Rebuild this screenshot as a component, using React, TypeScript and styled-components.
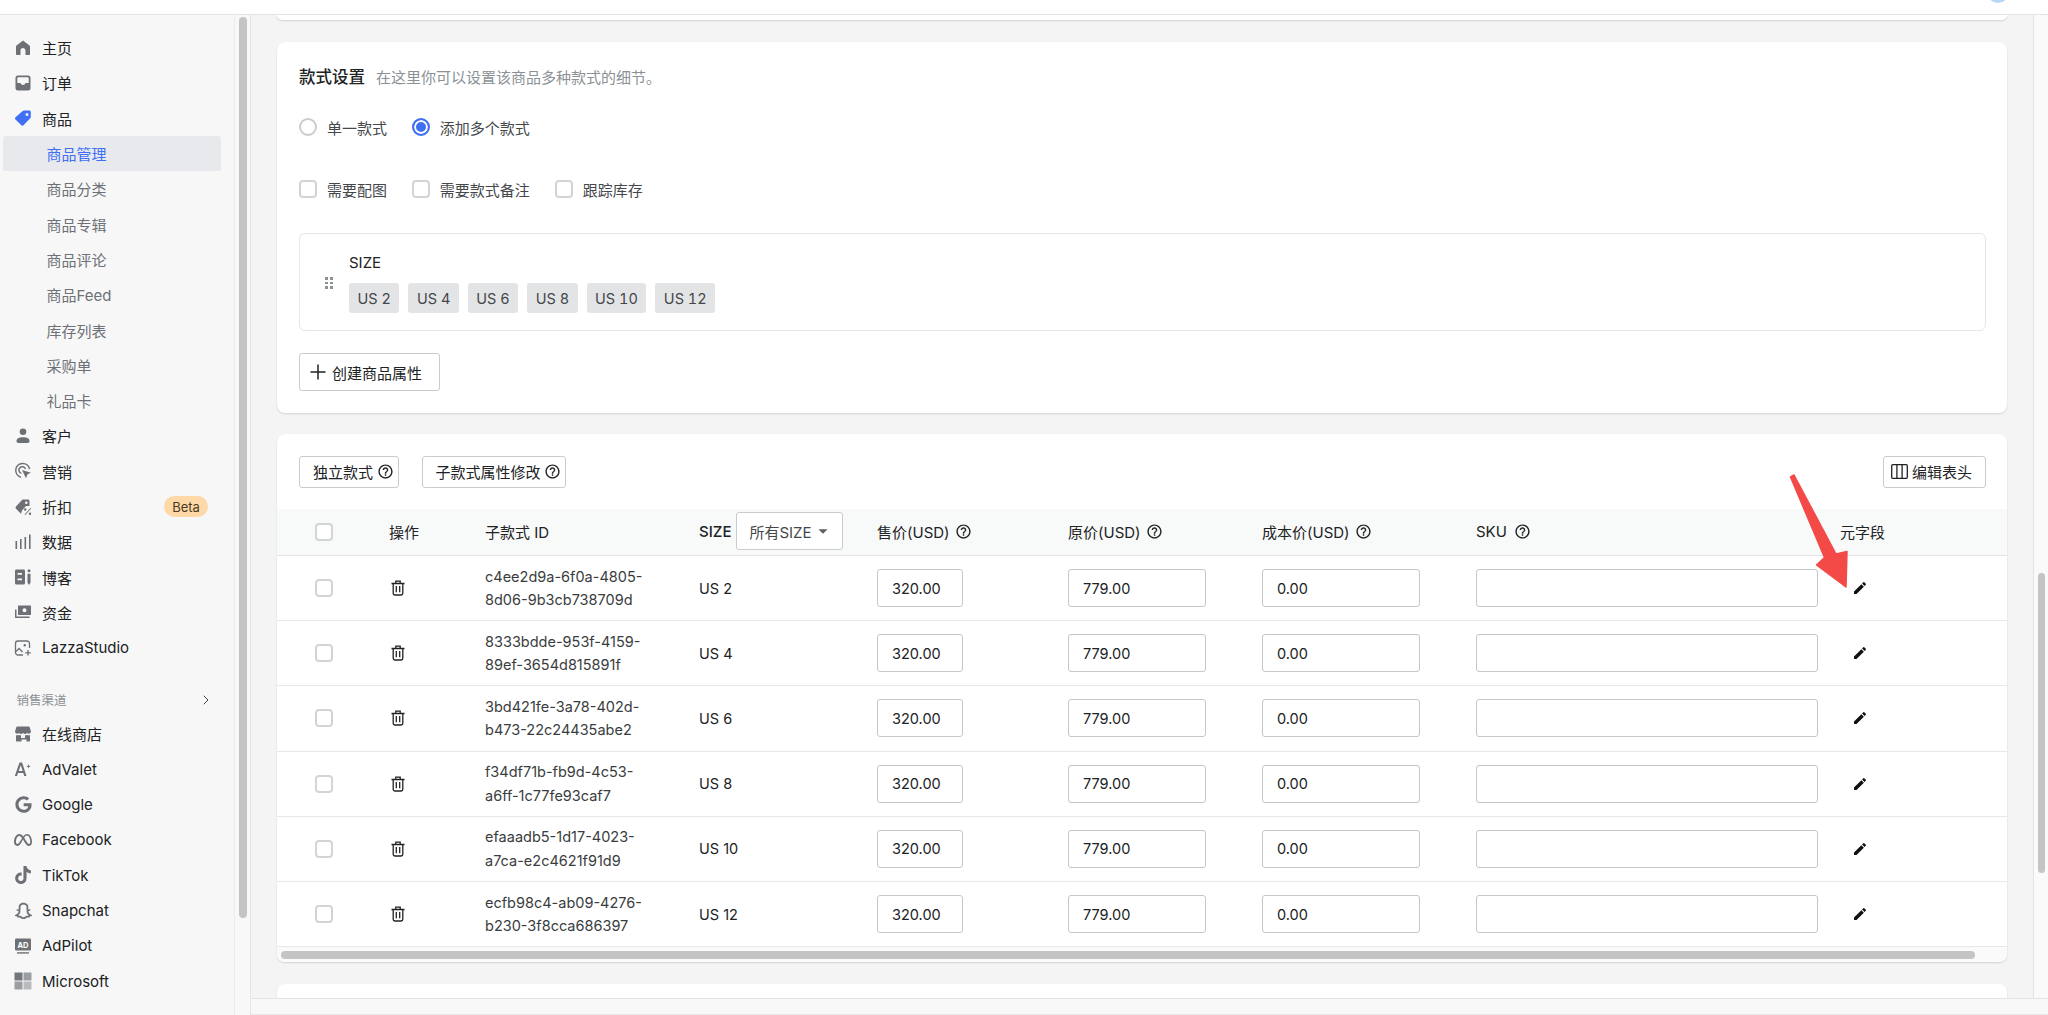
import React from "react"
import styled, { createGlobalStyle } from "styled-components"
import { FaGoogle, FaTiktok } from "react-icons/fa"
import { FaMeta } from "react-icons/fa6"
import { RiSnapchatLine } from "react-icons/ri"
import { MdEdit, MdOutlineHelpOutline, MdArrowDropDown } from "react-icons/md"
import { Plus, ChevronRight } from "lucide-react"

const GlobalStyle = createGlobalStyle`
    html, body {
        margin: 0;
        padding: 0;
        height: 100%;
        overflow: hidden;
        background: #f7f7f8;
    }

    body, input {
        font-family: Inter, "Noto Sans CJK SC", sans-serif;
        font-size: 14.5px;
        color: #202223;
    }

    * {
        box-sizing: border-box;
    }
`

const Page = styled.div`
    position: relative;
    width: 2048px;
    height: 1015px;
    display: flex;
    flex-direction: column;
    overflow: hidden;
`

const TopBar = styled.header`
    position: relative;
    height: 15px;
    flex: none;
    background: #fff;
    border-bottom: 1px solid #e3e3e3;
    overflow: hidden;
`

const Avatar = styled.span`
    position: absolute;
    left: 1987px;
    top: -19px;
    width: 22px;
    height: 22px;
    border-radius: 50%;
    background: #b9d6f6;
`

const Body = styled.div`
    flex: 1;
    min-height: 0;
    display: flex;
`

const Sidebar = styled.nav`
    width: 235px;
    flex: none;
    padding-top: 15px;
    background: #f7f7f8;
    border-right: 1px solid #ececec;
`

const NavRow = styled.div<{ $active?: boolean; $sub?: boolean }>`
    height: 35.3px;
    display: flex;
    align-items: center;
    gap: 10px;
    margin: 0 13px 0 ${props => (props.$sub ? "3px" : "14px")};
    padding-left: ${props => (props.$sub ? "43.5px" : "0")};
    border-radius: 3px;
    font-size: 15px;
    color: ${props => (props.$active ? "#3e6ff5" : props.$sub ? "#6d7175" : "#202223")};
    background: ${props => (props.$active ? "#e8e9ed" : "transparent")};
`

const NavIcon = styled.span<{ $color?: string }>`
    width: 18px;
    height: 18px;
    flex: none;
    display: flex;
    align-items: center;
    justify-content: center;
    color: ${props => props.$color || "#6d7175"};

    svg {
        display: block;
        flex: none;
    }
`

const Badge = styled.span`
    margin-left: auto;
    margin-right: 13px;
    width: 44px;
    height: 21.5px;
    border-radius: 11px;
    display: flex;
    align-items: center;
    justify-content: center;
    background: #ffd8a8;
    font-size: 13px;
    color: #4a3a20;
`

const ChannelHead = styled.div`
    margin: 26px 20px 0 16.5px;
    height: 17px;
    display: flex;
    align-items: center;
    justify-content: space-between;
    font-size: 12.5px;
    color: #8c9196;
`

const ChannelList = styled.div`
    margin-top: 8px;
`

const SideTrack = styled.div`
    width: 16px;
    flex: none;
    padding: 2px 3px 0 4px;
    background: #f8f8f8;
    border-right: 1px solid #e6e6e6;
`

const SideThumb = styled.div`
    height: 901px;
    border-radius: 4px;
    background: #c4c4c4;
`

const RightColumn = styled.div`
    flex: 1;
    min-width: 0;
    display: flex;
    flex-direction: column;
`

const ContentRow = styled.div`
    height: 984px;
    flex: none;
    display: flex;
    border-bottom: 1px solid #e3e3e3;
`

const Main = styled.main`
    flex: 1;
    min-width: 0;
    padding: 0 26px;
    background: #f4f4f4;
    overflow: hidden;
`

const Card = styled.section`
    background: #fff;
    border-radius: 8px;
    box-shadow: 0 1px 2px rgba(0, 0, 0, 0.14);
`

const StubCard = styled(Card)`
    height: 5px;
    border-radius: 0 0 8px 8px;
    margin-bottom: 22px;
`

const StyleCard = styled(Card)`
    height: 371px;
    padding: 22px 21px 0 22px;
    margin-bottom: 21px;
`

const ClippedCard = styled(Card)`
    height: 40px;
`

const CardTitle = styled.div`
    height: 24px;
    display: flex;
    align-items: center;
    gap: 11px;
`

const TitleText = styled.strong`
    font-size: 16.5px;
    font-weight: 500;
`

const TitleHint = styled.span`
    font-size: 15px;
    color: #8c9196;
`

const OptionRow = styled.div<{ $top: number }>`
    display: flex;
    height: 20px;
    align-items: center;
    margin-top: ${props => props.$top}px;
    gap: 24.8px;
`

const Option = styled.label`
    display: flex;
    align-items: center;
    gap: 10px;
    font-size: 15px;
    color: #45484b;
`

const Radio = styled.span<{ $checked?: boolean }>`
    width: 18px;
    height: 18px;
    border-radius: 50%;
    flex: none;
    border: 2px solid ${props => (props.$checked ? "#3e6ff5" : "#c9cccf")};
    background: ${props => (props.$checked ? "#3e6ff5" : "#fff")};
    box-shadow: ${props => (props.$checked ? "inset 0 0 0 2px #fff" : "none")};
`

const Check = styled.span`
    width: 18px;
    height: 18px;
    flex: none;
    border: 2px solid #d2d5d8;
    border-radius: 4px;
    background: #fff;
`

const AttrBox = styled.div`
    margin-top: 34px;
    height: 98px;
    border: 1px solid #e6e6e6;
    border-radius: 6px;
    display: flex;
    align-items: center;
    padding: 2px 0 0 25px;
    gap: 16px;
`

const Grip = styled.span`
    width: 8px;
    flex: none;
    display: grid;
    grid-template-columns: 3px 3px;
    gap: 2px;

    i {
        width: 2.5px;
        height: 2.5px;
        background: #8c9196;
    }
`

const AttrName = styled.div`
    font-size: 15px;
    line-height: 20px;
    margin-bottom: 10px;
`

const ChipRow = styled.div`
    display: flex;
    gap: 9px;
`

const Chip = styled.span`
    height: 30px;
    padding: 0 8.5px;
    display: flex;
    align-items: center;
    border-radius: 3px;
    background: #e3e4e6;
    font-size: 14.5px;
    font-variant-numeric: tabular-nums;
    color: #44474a;
`

const Button = styled.button`
    height: 31.5px;
    padding: 0 4px 0 13px;
    display: inline-flex;
    align-items: center;
    gap: 3.5px;
    background: #fff;
    border: 1px solid #c9cccf;
    border-radius: 3px;
    font-family: inherit;
    font-size: 15px;
    color: #202223;
`

const EditColumnsButton = styled(Button)`
    margin-left: auto;
    padding: 0 13px 0 7px;
    gap: 4px;
`

const CreateButton = styled(Button)`
    height: 38px;
    width: 141px;
    margin-top: 22px;
    padding: 0 0 0 6px;
    gap: 2px;
`

const TableCard = styled(Card)`
    height: 528px;
    margin-bottom: 22px;
    overflow: hidden;
`

const Toolbar = styled.div`
    height: 75px;
    padding: 22px 21px 0 22px;
    display: flex;
    align-items: flex-start;
    gap: 23px;
`

const TableGrid = styled.div`
    display: grid;
    grid-template-columns: 112px 96px 214px 178px 191px 194px 214px 364px 167px;
`

const HeadRow = styled(TableGrid)`
    height: 47px;
    background: #f8f9f9;
    border-bottom: 1px solid #e3e3e3;
`

const BodyRow = styled(TableGrid)`
    height: 65.2px;
    border-bottom: 1px solid #e8e8e8;
`

const Cell = styled.div`
    display: flex;
    align-items: center;
    min-width: 0;
    font-size: 14.5px;
`

const CheckCell = styled(Cell)`
    padding-left: 38px;
`

const HeadCell = styled(Cell)`
    font-size: 15px;
    gap: 5px;
    padding-bottom: 2px;
`

const SkuHead = styled(HeadCell)`
    gap: 7px;
`

const SizeCell = styled(HeadCell)`
    font-weight: 500;
`

const IdText = styled.div`
    font-size: 14.5px;
    line-height: 23.5px;
    color: #3a3d40;

    span {
        display: block;
        white-space: nowrap;
    }
`

const SizeSelect = styled.div`
    width: 107px;
    height: 38px;
    padding-left: 12px;
    display: flex;
    align-items: center;
    background: #fff;
    border: 1px solid #c9cccf;
    border-radius: 3px;
    font-weight: 400;
    color: #45484b;
`

const PriceInput = styled.input<{ $width: number }>`
    width: ${props => props.$width}px;
    height: 38px;
    padding: 0 14px;
    background: #fff;
    border: 1px solid #c4c7ca;
    border-radius: 3px;
    font-size: 14.5px;
    color: #202223;
    outline: none;
`

const TrashBtn = styled.span`
    display: flex;
    margin-left: 1px;
    color: #202223;
`

const PencilBtn = styled.span`
    display: flex;
    margin-left: 12px;
    color: #111;
`

const ScrollTrack = styled.div`
    height: 15px;
    padding: 4px 32px 0 4px;
    background: #fafafa;
`

const ScrollThumb = styled.div`
    height: 8px;
    border-radius: 4px;
    background: #c4c4c4;
`

const MainTrack = styled.div`
    width: 15px;
    flex: none;
    padding: 558px 3px 0 4px;
    background: #fafafa;
    border-left: 1px solid #e3e3e3;
`

const MainThumb = styled.div`
    height: 300px;
    border-radius: 4px;
    background: #c4c4c4;
`

const BottomBar = styled.div`
    flex: 1;
    background: #f8f8f8;
    border-bottom: 1px solid #e8e8e8;
`

const Arrow = styled.svg`
    position: absolute;
    left: 1785px;
    top: 470px;
    width: 70px;
    height: 125px;
`

const HelpIcon = () => <MdOutlineHelpOutline size={17} />

// sidebar drawings, all on an 18 box
const HomeIcon = () => (
    <svg width="18" height="18" viewBox="0 0 18 18" fill="currentColor">
        <path d="M9 1.5 15.5 6.5c.4.3.5.6.5 1V15c0 .6-.4 1-1 1h-3.500V11.500a2.500 2.500 0 0 0-5 0V16H3c-.6 0-1-.4-1-1V7.500c0-.4.1-.7.5-1z" />
    </svg>
)

const InboxIcon = () => (
    <svg width="18" height="18" viewBox="0 0 18 18" fill="currentColor">
        <path fillRule="evenodd" d="M4 1.500h10A2.500 2.500 0 0 1 16.500 4v10a2.500 2.500 0 0 1-2.500 2.500H4A2.500 2.500 0 0 1 1.500 14V4A2.500 2.500 0 0 1 4 1.500zM4.200 3.300c-.5 0-.9.4-.9.9V9h3.200c.4 1.300 1.200 2 2.500 2s2.100-.7 2.500-2h3.200V4.200c0-.5-.4-.9-.9-.9z" />
    </svg>
)

const TagIcon = () => (
    <svg width="18" height="18" viewBox="0 0 18 18" fill="currentColor">
        <path fillRule="evenodd" d="M10 1.500h5.200c.9 0 1.600.7 1.600 1.600V8c0 .5-.2 1-.6 1.300l-6.700 7c-.6.600-1.600.6-2.200 0L1.500 10.500c-.6-.6-.6-1.600 0-2.200l7.200-6.300c.4-.3.800-.5 1.300-.5zM13 4a1.500 1.500 0 1 0 0 3 1.500 1.500 0 0 0 0-3z" />
    </svg>
)

const PersonIcon = () => (
    <svg width="18" height="18" viewBox="0 0 18 18" fill="currentColor">
        <circle cx="9" cy="4.800" r="3.300" />
        <path d="M2.500 14c0-2.400 2.200-3.800 6.500-3.800s6.500 1.400 6.500 3.800c0 1.300-.7 2-2 2h-9c-1.300 0-2-.7-2-2z" />
    </svg>
)

const MarketingIcon = () => (
    <svg width="18" height="18" viewBox="0 0 18 18" fill="none" stroke="currentColor" strokeWidth="1.500">
        <path d="M7 15.200A7 7 0 1 1 15.600 7" />
        <path d="M7.400 11.400A3.400 3.400 0 1 1 11.500 7" />
        <path d="M8 8l9 2.800-3.500 1.500-1.500 4z" fill="currentColor" stroke="none" />
    </svg>
)

const DiscountIcon = () => (
    <svg width="18" height="18" viewBox="0 0 18 18" fill="currentColor">
        <path fillRule="evenodd" d="M9 1.500h5c.9 0 1.500.6 1.500 1.500v5h-3.500l-4 4.500-1 3.300-5-5c-.6-.6-.6-1.600 0-2.200L8 1.900c.3-.3.600-.4 1-.4zM12.300 3.500a1.300 1.300 0 1 0 0 2.600 1.300 1.300 0 0 0 0-2.600z" />
        <path d="M10.500 16.500l6-6.500.7.600-6 6.500z" />
        <circle cx="11.200" cy="11.500" r="1.200" />
        <circle cx="16" cy="15.800" r="1.200" />
    </svg>
)

const BarsIcon = () => (
    <svg width="18" height="18" viewBox="0 0 18 18" fill="currentColor">
        <rect x="1.500" y="8" width="1.600" height="8" />
        <rect x="6" y="6" width="1.600" height="10" />
        <rect x="10.500" y="4" width="1.600" height="12" />
        <rect x="15" y="1.500" width="1.600" height="14.500" />
    </svg>
)

const BlogIcon = () => (
    <svg width="18" height="18" viewBox="0 0 18 18" fill="currentColor">
        <path fillRule="evenodd" d="M2.500 1.500h7c1 0 1.500.6 1.500 1.500v12c0 .9-.6 1.500-1.500 1.500h-7C1.600 16.500 1 15.900 1 15V3c0-.9.6-1.500 1.500-1.500zM3.500 5v1.800H8V5zm0 5.500v1.800H8v-1.800z" />
        <circle cx="15" cy="2.800" r="1.500" />
        <path d="M13.500 5.800h3v8.700L15 17l-1.500-2.500z" />
    </svg>
)

const CashIcon = () => (
    <svg width="18" height="18" viewBox="0 0 18 18" fill="currentColor">
        <path fillRule="evenodd" d="M4.500 2.500h12c.3 0 .5.200.5.500v8.500c0 .3-.2.500-.5.500h-12c-.3 0-.5-.2-.5-.5V3c0-.3.200-.5.500-.5zm6 2.700a2 2 0 1 0 0 4 2 2 0 0 0 0-4z" />
        <path d="M1 6.500h1.500v7h13V15H1.500c-.3 0-.5-.2-.5-.5z" />
    </svg>
)

const StudioIcon = () => (
    <svg width="18" height="18" viewBox="0 0 18 18" fill="none" stroke="currentColor" strokeWidth="1.300">
        <path d="M9 16H4a2.500 2.500 0 0 1-2.500-2.500v-9A2.500 2.500 0 0 1 4 2h9a2.500 2.500 0 0 1 2.500 2.500V9" />
        <path d="M2 12.500 5 9.500l3.500 3.500" />
        <circle cx="10.800" cy="6.200" r="1.200" fill="currentColor" stroke="none" />
        <path d="M14 11v5.500M11.200 13.800h5.500" />
    </svg>
)

const StoreIcon = () => (
    <svg width="18" height="18" viewBox="0 0 18 18" fill="currentColor">
        <path d="M3.500 1.500h11c.6 0 1 .3 1.200.8L17 6.500a2.300 2.300 0 0 1-4 1.500 2.700 2.700 0 0 1-4 0 2.700 2.700 0 0 1-4 0 2.300 2.300 0 0 1-4-1.500l1.300-4.200c.2-.5.600-.8 1.200-.8z" />
        <path d="M2 10.200c1 .3 2.200.2 3-.3.600.3 1.300.4 2 .3V13h4v-2.800c.7.100 1.400 0 2-.3.800.5 2 .6 3 .3V15.500c0 .6-.4 1-1 1h-2.500V14.500h-5v2H3c-.6 0-1-.4-1-1z" />
    </svg>
)

const AdValetIcon = () => (
    <svg width="18" height="18" viewBox="0 0 18 18" fill="currentColor">
        <path d="M5.500 2.500h2.600l4.400 13.500h-2.300l-.9-3H4l-1 3H.8zm3.200 8.600L6.800 5.300 4.700 11.100z" />
        <path d="M14.500 4l.6 1.700 1.700.6-1.700.6-.6 1.700-.6-1.700-1.700-.6 1.700-.6z" />
    </svg>
)

const AdIcon = () => (
    <svg width="18" height="18" viewBox="0 0 18 18" fill="currentColor">
        <rect x="1" y="1.500" width="16" height="12" rx="1.200" />
        <rect x="3" y="15.200" width="12" height="1.400" />
        <text x="9" y="10.500" textAnchor="middle" fontSize="7.500" fontWeight="700" fill="#fff" fontFamily="Inter, sans-serif">AD</text>
    </svg>
)

const WindowsIcon = () => (
    <svg width="18" height="18" viewBox="0 0 18 18">
        <rect x="0.500" y="0.500" width="8" height="8" fill="#72767a" />
        <rect x="9.500" y="0.500" width="8" height="8" fill="#9b9ea1" />
        <rect x="0.500" y="9.500" width="8" height="8" fill="#9b9ea1" />
        <rect x="9.500" y="9.500" width="8" height="8" fill="#b9bbbd" />
    </svg>
)

const TrashIcon = () => (
    <svg width="16" height="16" viewBox="0 0 16 16" fill="none" stroke="currentColor" strokeWidth="1.300">
        <path d="M1.500 3.500h13M5.800 3.300V1.200h4.400v2.100" />
        <path d="M3.200 3.500v9.800c0 1 .6 1.700 1.700 1.700h6.200c1 0 1.700-.7 1.700-1.700V3.500" />
        <path d="M6.300 6v6.300M9.700 6v6.300" />
    </svg>
)

const ColumnsIcon = () => (
    <svg width="17" height="15" viewBox="0 0 17 15" fill="none" stroke="currentColor" strokeWidth="1.300">
        <rect x="0.700" y="0.700" width="15.600" height="13.600" rx="1" />
        <path d="M5.900 0.700v13.600M11.100 0.700v13.600" />
    </svg>
)

const mainNav = [
    { label: "主页", icon: <HomeIcon /> },
    { label: "订单", icon: <InboxIcon /> },
    { label: "商品", icon: <TagIcon />, color: "#3e6ff5" },
    { label: "商品管理", sub: true, active: true },
    { label: "商品分类", sub: true },
    { label: "商品专辑", sub: true },
    { label: "商品评论", sub: true },
    { label: "商品Feed", sub: true },
    { label: "库存列表", sub: true },
    { label: "采购单", sub: true },
    { label: "礼品卡", sub: true },
    { label: "客户", icon: <PersonIcon /> },
    { label: "营销", icon: <MarketingIcon /> },
    { label: "折扣", icon: <DiscountIcon />, badge: "Beta" },
    { label: "数据", icon: <BarsIcon /> },
    { label: "博客", icon: <BlogIcon /> },
    { label: "资金", icon: <CashIcon /> },
    { label: "LazzaStudio", icon: <StudioIcon /> },
]

const channels = [
    { label: "在线商店", icon: <StoreIcon /> },
    { label: "AdValet", icon: <AdValetIcon /> },
    { label: "Google", icon: <FaGoogle size={17} /> },
    { label: "Facebook", icon: <FaMeta size={18} /> },
    { label: "TikTok", icon: <FaTiktok size={18} /> },
    { label: "Snapchat", icon: <RiSnapchatLine size={21} /> },
    { label: "AdPilot", icon: <AdIcon /> },
    { label: "Microsoft", icon: <WindowsIcon /> },
]

const sizes = ["US 2", "US 4", "US 6", "US 8", "US 10", "US 12"]

const variants = [
    { id: ["c4ee2d9a-6f0a-4805-", "8d06-9b3cb738709d"], size: "US 2" },
    { id: ["8333bdde-953f-4159-", "89ef-3654d815891f"], size: "US 4" },
    { id: ["3bd421fe-3a78-402d-", "b473-22c24435abe2"], size: "US 6" },
    { id: ["f34df71b-fb9d-4c53-", "a6ff-1c77fe93caf7"], size: "US 8" },
    { id: ["efaaadb5-1d17-4023-", "a7ca-e2c4621f91d9"], size: "US 10" },
    { id: ["ecfb98c4-ab09-4276-", "b230-3f8cca686397"], size: "US 12" },
]

function NavItem({ item }: { item: any }) {
    return (
        <NavRow $active={item.active} $sub={item.sub}>
            {item.icon && <NavIcon $color={item.color}>{item.icon}</NavIcon>}
            {item.label}
            {item.badge && <Badge>{item.badge}</Badge>}
        </NavRow>
    )
}

export default function App() {
    return (
        <Page>
            <GlobalStyle />
            <TopBar>
                <Avatar />
            </TopBar>
            <Body>
                <Sidebar>
                    {mainNav.map(item => <NavItem key={item.label} item={item} />)}
                    <ChannelHead>
                        销售渠道
                        <ChevronRight size={16} strokeWidth={1.5} color="#45484b" />
                    </ChannelHead>
                    <ChannelList>
                        {channels.map(item => <NavItem key={item.label} item={item} />)}
                    </ChannelList>
                </Sidebar>
                <SideTrack>
                    <SideThumb />
                </SideTrack>
                <RightColumn>
                    <ContentRow>
                        <Main>
                            <StubCard />
                            <StyleCard>
                                <CardTitle>
                                    <TitleText>款式设置</TitleText>
                                    <TitleHint>在这里你可以设置该商品多种款式的细节。</TitleHint>
                                </CardTitle>
                                <OptionRow $top={29}>
                                    <Option><Radio />单一款式</Option>
                                    <Option><Radio $checked />添加多个款式</Option>
                                </OptionRow>
                                <OptionRow $top={42}>
                                    <Option><Check />需要配图</Option>
                                    <Option><Check />需要款式备注</Option>
                                    <Option><Check />跟踪库存</Option>
                                </OptionRow>
                                <AttrBox>
                                    <Grip>
                                        {[0, 1, 2, 3, 4, 5].map(n => <i key={n} />)}
                                    </Grip>
                                    <div>
                                        <AttrName>SIZE</AttrName>
                                        <ChipRow>
                                            {sizes.map(size => <Chip key={size}>{size}</Chip>)}
                                        </ChipRow>
                                    </div>
                                </AttrBox>
                                <CreateButton>
                                    <Plus size={24} strokeWidth={1.5} />
                                    创建商品属性
                                </CreateButton>
                            </StyleCard>
                            <TableCard>
                                <Toolbar>
                                    <Button>独立款式<HelpIcon /></Button>
                                    <Button>子款式属性修改<HelpIcon /></Button>
                                    <EditColumnsButton>
                                        <ColumnsIcon />
                                        编辑表头
                                    </EditColumnsButton>
                                </Toolbar>
                                <HeadRow>
                                    <CheckCell><Check /></CheckCell>
                                    <HeadCell>操作</HeadCell>
                                    <HeadCell>子款式 ID</HeadCell>
                                    <SizeCell>
                                        SIZE
                                        <SizeSelect>
                                            所有SIZE
                                            <MdArrowDropDown size={22} color="#5c5f62" />
                                        </SizeSelect>
                                    </SizeCell>
                                    <HeadCell>售价(USD)<HelpIcon /></HeadCell>
                                    <HeadCell>原价(USD)<HelpIcon /></HeadCell>
                                    <HeadCell>成本价(USD)<HelpIcon /></HeadCell>
                                    <SkuHead>SKU<HelpIcon /></SkuHead>
                                    <HeadCell>元字段</HeadCell>
                                </HeadRow>
                                {variants.map(variant => (
                                    <BodyRow key={variant.size}>
                                        <CheckCell><Check /></CheckCell>
                                        <Cell><TrashBtn><TrashIcon /></TrashBtn></Cell>
                                        <Cell>
                                            <IdText>
                                                <span>{variant.id[0]}</span>
                                                <span>{variant.id[1]}</span>
                                            </IdText>
                                        </Cell>
                                        <Cell>{variant.size}</Cell>
                                        <Cell><PriceInput $width={86} defaultValue="320.00" /></Cell>
                                        <Cell><PriceInput $width={138} defaultValue="779.00" /></Cell>
                                        <Cell><PriceInput $width={158} defaultValue="0.00" /></Cell>
                                        <Cell><PriceInput $width={342} /></Cell>
                                        <Cell><PencilBtn><MdEdit size={16} /></PencilBtn></Cell>
                                    </BodyRow>
                                ))}
                                <ScrollTrack>
                                    <ScrollThumb />
                                </ScrollTrack>
                            </TableCard>
                            <ClippedCard />
                        </Main>
                        <MainTrack>
                            <MainThumb />
                        </MainTrack>
                    </ContentRow>
                    <BottomBar />
                </RightColumn>
            </Body>
            <Arrow viewBox="0 0 70 125">
                <path
                    d="M5.500 7 9 5 51 84 62 81.500 61 117 31.500 95 39.500 87.500z"
                    fill="#f44a47"
                    stroke="#f44a47"
                    strokeWidth="1.500"
                    strokeLinejoin="round"
                />
            </Arrow>
        </Page>
    )
}
